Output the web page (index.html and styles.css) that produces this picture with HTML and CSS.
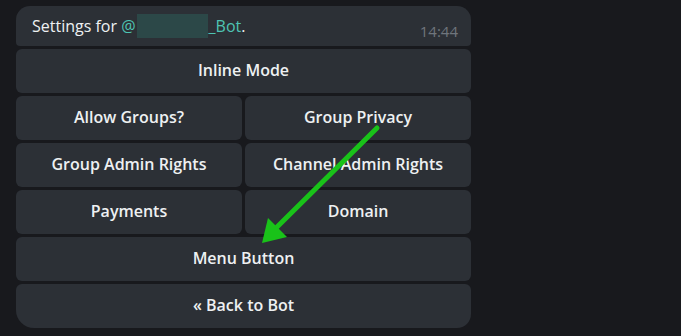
FILE: index.html
```html
<!DOCTYPE html>
<html lang="en">
<head>
  <meta charset="UTF-8" />
  <title>BotFather settings</title>
  <link rel="stylesheet" href="styles.css">
</head>
<body>

  <div class="chat">
    <!-- Üzenet -->
    <div class="bubble">
      <span class="bubble-text">Settings for <span class="mention">@<span class="blur"></span>_Bot</span>.</span>
      <span class="time">14:44</span>
    </div>

    <!-- Inline billentyűzet -->
    <div class="keyboard">
      <div class="key wide">Inline Mode</div>
      <div class="key">Allow Groups?</div>
      <div class="key">Group Privacy</div>
      <div class="key">Group Admin Rights</div>
      <div class="key">Channel Admin Rights</div>
      <div class="key">Payments</div>
      <div class="key">Domain</div>
      <div class="key wide">Menu Button</div>
      <div class="key wide last">« Back to Bot</div>
    </div>

    <svg class="arrow" width="681" height="336" viewBox="0 0 681 336">
      <line x1="377" y1="128" x2="276" y2="228" stroke="#19c219" stroke-width="5" stroke-linecap="round" />
      <polygon points="262,243 268,218 287,237" fill="#19c219" />
    </svg>
  </div>

</body>
</html>
```

FILE: styles.css
```css
:root {
  --bg: #18191d;
  --bubble: #2c3036;
  --key: #2c3036;
  --text: #eef0f2;
  --accent: #4ec4b3;
  --muted: #6f757c;
}

* {
  box-sizing: border-box;
}

body {
  margin: 0;
  background: var(--bg);
  font-family: 'Open Sans', sans-serif;
  color: var(--text);
  width: 681px;
  height: 336px;
  overflow: hidden;
}

.chat {
  position: relative;
  width: 681px;
  height: 336px;
  padding: 6px 210px 0 16px;
}

.bubble {
  height: 40px;
  background: var(--bubble);
  border-radius: 14px 14px 4px 4px;
  display: flex;
  align-items: flex-start;
  justify-content: space-between;
  padding: 8px 13px 0 16px;
  font-size: 16px;
  line-height: 22px;
}

.mention {
  color: var(--accent);
}

.blur {
  display: inline-block;
  width: 71px;
  height: 24px;
  margin: 0 1px;
  vertical-align: -6px;
  background: #2c4848;
}

.time {
  font-size: 15px;
  color: var(--muted);
  margin-top: 6px;
}

.keyboard {
  display: grid;
  grid-template-columns: 1fr 1fr;
  gap: 3px;
  margin-top: 3px;
}

.key {
  height: 44px;
  background: var(--key);
  border-radius: 6px;
  display: flex;
  align-items: center;
  justify-content: center;
  font-size: 16px;
  font-weight: 600;
  padding-bottom: 3px;
}

.wide {
  grid-column: span 2;
}

.last {
  border-radius: 6px 6px 14px 18px;
}

.arrow {
  position: absolute;
  left: 0;
  top: 0;
  pointer-events: none;
}
```
